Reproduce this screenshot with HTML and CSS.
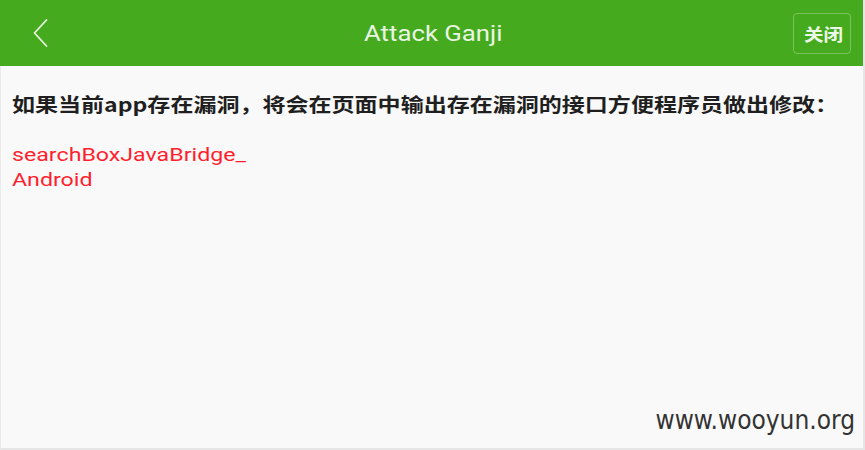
FILE: index.html
```html
<!DOCTYPE html>
<html>
<head>
<meta charset="utf-8">
<link rel="stylesheet" href="styles.css">
</head>
<body>
<div class="page">
  <header class="bar">
    <div class="back">
      <svg width="20" height="30" viewBox="0 0 20 30"><path d="M15.5 2 L3.5 15 L15.5 28" fill="none" stroke="#e8f5e0" stroke-width="1.8" stroke-linecap="round" stroke-linejoin="round"/></svg>
    </div>
    <div class="title"><span class="wide">Attack Ganji</span></div>
    <div class="close"><span class="wide">关闭</span></div>
  </header>
  <main class="content">
    <p class="msg"><span class="wide">如果当前app存在漏洞，将会在页面中输出存在漏洞的接口方便程序员做出修改：</span></p>
    <p class="vuln"><span class="wide">searchBoxJavaBridge_</span><br><span class="wide">Android</span></p>
  </main>
  <div class="mark">www.wooyun.org</div>
</div>
</body>
</html>
```
FILE: styles.css
```css
html, body { margin: 0; padding: 0; }
body { width: 865px; height: 450px; overflow: hidden; background: #f9f9f9; font-family: Roboto, "Noto Sans CJK SC", sans-serif; }
.page { position: relative; width: 865px; height: 450px; box-sizing: border-box; border-left: 1px solid #ececec; border-right: 2px solid #e6e6e6; border-bottom: 2px solid #e6e6e6; display: flex; flex-direction: column; }
.wide { display: inline-block; transform: scaleX(1.2); transform-origin: left center; }
.bar { height: 66px; margin-left: -1px; background: #46aa1e; display: flex; align-items: center; padding: 0 12px 0 31px; box-sizing: border-box; }
.back { width: 20px; height: 30px; display: flex; }
.title { flex: 1; color: #e9f6e3; font-size: 22px; padding-left: 313px; }
.title .wide { transform: scaleX(1.17); }
.close { width: 58px; height: 41px; box-sizing: border-box; border: 1px solid rgba(255,255,255,0.28); border-radius: 4px; color: #eef8ea; font-size: 17px; font-weight: bold; display: flex; align-items: center; padding-left: 10px; font-family: "Noto Sans CJK SC", sans-serif; }
.close .wide { transform: scaleX(1.15); }
.content { padding: 0 11px; }
.msg { margin: 24px 0 0; font-family: "Noto Sans CJK SC", sans-serif; font-weight: bold; font-size: 19.2px; color: #1f1f1f; line-height: 28px; white-space: nowrap; text-spacing-trim: space-all; }
.vuln { margin: 24px 0 0; color: #ff1e2d; font-size: 19px; line-height: 25px; }
.vuln .wide { transform: scaleX(1.22); }
.mark { position: absolute; right: 8px; bottom: 13px; font-family: "DejaVu Sans Condensed", "DejaVu Sans", sans-serif; font-stretch: condensed; font-size: 26px; color: #333; }
```
